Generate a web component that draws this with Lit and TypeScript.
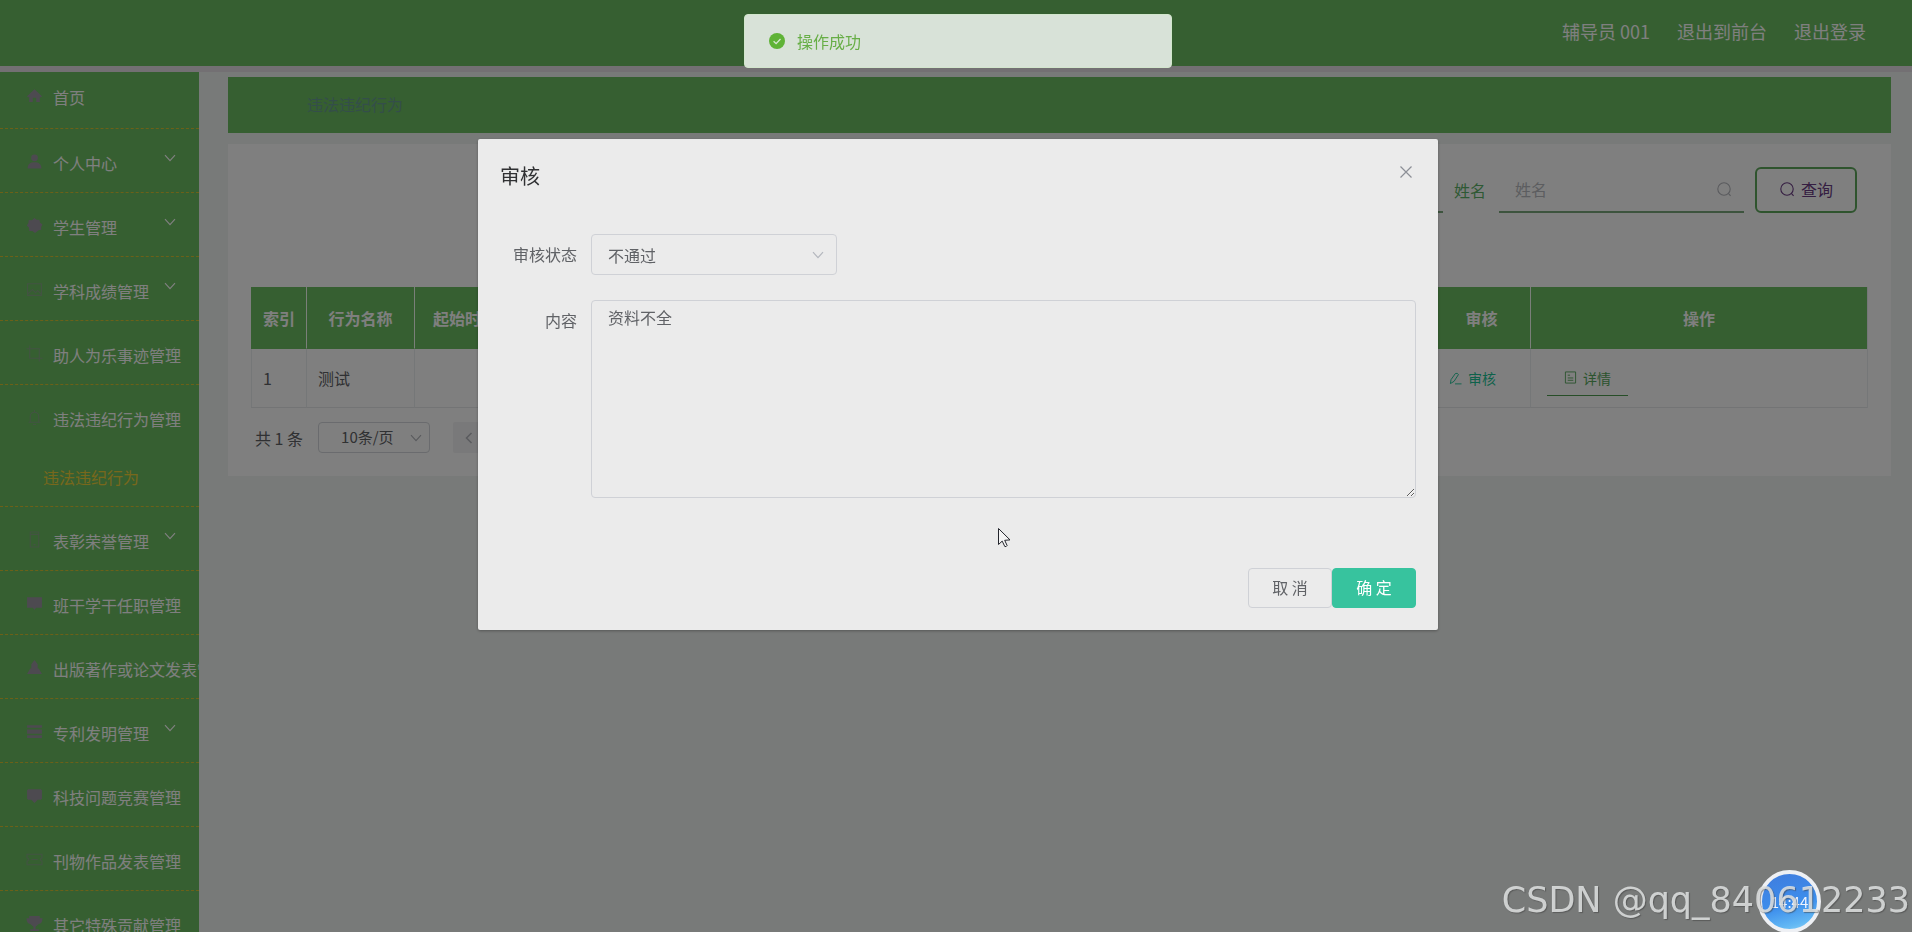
import { LitElement, html, css, svg, nothing } from "lit";
import { customElement, property, state } from "lit/decorators.js";
import { classMap } from "lit/directives/class-map.js";

const FONT = css`"Noto Sans CJK SC", "Noto Sans", sans-serif`;

const chevronDown = html`<svg viewBox="0 0 12 12" width="12" height="12" fill="none" stroke="currentColor" stroke-width="1.2"><path d="M1 3.2 6 8.6 11 3.2" /></svg>`;

const magnifier = html`<svg viewBox="0 0 16 16" width="16" height="16" fill="none" stroke="currentColor" stroke-width="1.1"><circle cx="8" cy="8" r="6.2" /><path d="m12.400 12.400 2.200 2.400" /></svg>`;

const menuIcons: Record<string, unknown> = {
  home: svg`<path d="M1 8.6 8 2l7 6.6-1 1.2-1-.9V14H9.6v-4H6.4v4H3V8.900l-1 .9z" />`,
  user: svg`<circle cx="8" cy="4.500" r="3.200" /><path d="M1.500 14.500c0-4 2.500-5.800 6.500-5.800s6.500 1.800 6.500 5.800z" />`,
  badge: svg`<path d="m8 1 2 1.700 2.700-.2.500 2.600L15.500 7l-1.300 2.300.2 2.700-2.600.5L8.500 15 6 13.200l-2.900-.1-.3-2.900L.8 8l1.500-2.300.3-2.800 2.900.1z" />`,
  picture: svg`<path fill="none" stroke="currentColor" d="M1.500 2.500h13v11h-13zM2 12l4-4 3 3 2-2 3.500 3.500" />`,
  crop: svg`<path fill="none" stroke="currentColor" d="M3.500.500v12h12M.500 3.500h12v12" />`,
  bell: svg`<path fill="none" stroke="currentColor" d="M2.500 12.500h11M4 12.500V7a4 4 0 0 1 8 0v5.500M8 1v2M6.500 14.500h3" />`,
  phone: svg`<path fill="none" stroke="currentColor" d="M4 .900h8v14.200H4zM7 12.800h2M4 3.200h8" />`,
  message: svg`<path d="M1 2h14v10H9.500L8 14l-1.500-2H1z" />`,
  mic: svg`<path d="M8 1 11 5v4h1l3 5H1l3-5h1V5z" />`,
  list: svg`<path d="M1 2h14v2.500H1zM1 6h14v4H1zM1 11.500h14V14H1z" />`,
  chat: svg`<path d="M2 2h12l1 1v8l-1 1h-3l-3 3-3-3H2l-1-1V3z" />`,
  ticket: svg`<path fill="none" stroke="currentColor" d="M1 3h14v3.500a1.500 1.500 0 0 0 0 3V13H1V9.500a1.500 1.500 0 0 0 0-3zM5 8h6" />`,
  trophy: svg`<path d="M3 1h10v2h2.500c0 3-1 5-3.500 5.500L9 11v2.500h3V15H4v-1.500h3V11L4 8.500C1.500 8 .500 6 .500 3H3z" />`,
};

interface MenuEntry {
  label: string;
  icon: string;
  faint?: boolean;
  leaf?: boolean;
  children?: string[];
}

const MENU: MenuEntry[] = [
  { label: "首页", icon: "home", leaf: true },
  { label: "个人中心", icon: "user" },
  { label: "学生管理", icon: "badge" },
  { label: "学科成绩管理", icon: "picture", faint: true },
  { label: "助人为乐事迹管理", icon: "crop", faint: true },
  { label: "违法违纪行为管理", icon: "bell", faint: true, children: ["违法违纪行为"] },
  { label: "表彰荣誉管理", icon: "phone", faint: true },
  { label: "班干学干任职管理", icon: "message" },
  { label: "出版著作或论文发表管理", icon: "mic" },
  { label: "专利发明管理", icon: "list" },
  { label: "科技问题竞赛管理", icon: "chat" },
  { label: "刊物作品发表管理", icon: "ticket", faint: true },
  { label: "其它特殊贡献管理", icon: "trophy" },
];

@customElement("side-menu")
export class SideMenu extends LitElement {
  static styles = css`
    :host {
      display: block;
      flex: none;
      width: 199px;
      overflow: hidden;
      background: #6cbe62;
      color: #fff;
      font: 16px/24px ${FONT};
    }
    .list,
    .sub {
      list-style: none;
      margin: 0;
      padding: 0;
    }
    .entry {
      border-bottom: 1px dashed #d8c030;
    }
    .link {
      position: relative;
      display: flex;
      align-items: center;
      gap: 10px;
      height: 63px;
      box-sizing: border-box;
      padding: 4px 0 0 26px;
      color: inherit;
      text-decoration: none;
      white-space: nowrap;
    }
    .entry:first-child .link {
      height: 56px;
      padding: 0 0 6px 26px;
    }
    .icon {
      flex: none;
      margin-bottom: 3px;
      color: #a68cb0;
      opacity: 0.8;
    }
    .faint {
      opacity: 0.45;
    }
    .arrow {
      position: absolute;
      top: 23px;
      right: 23px;
      display: flex;
    }
    .under {
      opacity: 0.4;
    }
    .sublink {
      display: block;
      padding: 17px 0 17px 43px;
      color: #f0d038;
      text-decoration: none;
    }
  `;

  render() {
    return html`<nav>
      <ul class="list">
        ${MENU.map(
          (m) => html`<li class="entry">
            <a class="link" href="#">
              <svg class=${classMap({ icon: true, faint: !!m.faint })} viewBox="0 0 16 16" width="17" height="17" fill="currentColor">${menuIcons[m.icon]}</svg>
              <span>${m.label}</span>
              ${m.leaf ? nothing : html`<span class=${classMap({ arrow: true, under: m.label.length > 7 })}>${chevronDown}</span>`}
            </a>
            ${m.children
              ? html`<ul class="sub">
                  ${m.children.map((c) => html`<li><a class="sublink" href="#">${c}</a></li>`)}
                </ul>`
              : nothing}
          </li>`
        )}
      </ul>
    </nav>`;
  }
}

@customElement("record-panel")
export class RecordPanel extends LitElement {
  static styles = css`
    :host {
      display: block;
      background: #fff;
      padding: 23px 23px 23px;
      color: #606266;
      font: 16px/24px ${FONT};
    }
    .search {
      display: flex;
      justify-content: flex-end;
      align-items: center;
      gap: 11px;
      padding-right: 11px;
    }
    .label {
      padding: 0 2px 0 0;
      color: #5cb268;
    }
    .field {
      display: flex;
      align-items: center;
      width: 245px;
      height: 46px;
      box-sizing: border-box;
      padding: 0 12px 0 16px;
      border-bottom: 2px solid #7aa87c;
      color: #b4b6bc;
    }
    .text {
      flex: 1;
      min-width: 0;
      padding: 0;
      border: 0;
      outline: 0;
      background: none;
      font: inherit;
      color: #606266;
    }
    .text::placeholder {
      color: #b8bac0;
      opacity: 1;
    }
    .query {
      display: flex;
      align-items: center;
      justify-content: center;
      gap: 6px;
      width: 102px;
      height: 46px;
      padding: 0 6px 2px;
      border: 2px solid #5ea85c;
      border-radius: 6px;
      background: none;
      color: #6a3c84;
      font: inherit;
    }
    .grid {
      width: 100%;
      margin-top: 74px;
      border-collapse: separate;
      border-spacing: 0;
      table-layout: fixed;
      border-right: 1px solid #ebeef0;
    }
    .grid th,
    .grid td {
      box-sizing: border-box;
      padding: 0 11px;
      border-bottom: 1px solid #e6e8ea;
      border-left: 1px solid #ebeef0;
      text-align: left;
    }
    .grid th {
      height: 62px;
      padding: 0;
      background: #6cbe62;
      border-bottom-color: #6cbe62;
      border-left-color: #f4fff2;
      color: #fff;
      font-weight: 700;
      text-align: center;
    }
    .grid th:first-child {
      border-left-color: #6cbe62;
    }
    .grid td {
      height: 59px;
    }
    .c-index {
      width: 55px;
    }
    .c-name {
      width: 108px;
    }
    .c-time {
      width: 101px;
    }
    .c-check {
      width: 98px;
    }
    .c-ops {
      width: 337px;
    }
    .action {
      display: inline-flex;
      align-items: center;
      gap: 6px;
      border: 0;
      background: none;
      font: 14px/20px ${FONT};
    }
    .check {
      padding: 0 5px 2px;
      color: #1cc496;
    }
    .detail {
      height: 36px;
      margin-left: 5px;
      padding: 0 17px;
      border-bottom: 1px solid #4f9c50;
      color: #58a85c;
    }
    .pager {
      display: flex;
      align-items: center;
      gap: 15px;
      margin-top: 14px;
      padding-left: 4px;
    }
    .size {
      display: grid;
      align-items: center;
      width: 112px;
    }
    .size-select {
      grid-area: 1 / 1;
      height: 31px;
      padding: 0 0 2px 22px;
      border: 1px solid #d4d6dc;
      border-radius: 4px;
      appearance: none;
      background: none;
      color: #606266;
      font: 15px/24px ${FONT};
    }
    .size-arrow {
      grid-area: 1 / 1;
      justify-self: end;
      display: flex;
      padding-right: 8px;
      color: #b4b6bc;
      pointer-events: none;
    }
    .prev {
      display: flex;
      align-items: center;
      justify-content: center;
      width: 32px;
      height: 31px;
      margin-left: 8px;
      padding: 0;
      border: 0;
      border-radius: 2px;
      background: #f2f2f4;
      color: #b4b6bc;
    }
  `;

  render() {
    return html`
      <form class="search">
        <div class="field"><input class="text" aria-label="行为名称" /></div>
        <label class="label" for="person">姓名</label>
        <div class="field">
          <input class="text" id="person" placeholder="姓名" />${magnifier}
        </div>
        <button class="query" type="button">${magnifier}<span>查询</span></button>
      </form>
      <table class="grid">
        <colgroup>
          <col class="c-index" /><col class="c-name" /><col class="c-time" /><col /><col class="c-check" /><col class="c-ops" />
        </colgroup>
        <thead>
          <tr><th>索引</th><th>行为名称</th><th>起始时间</th><th></th><th>审核</th><th>操作</th></tr>
        </thead>
        <tbody>
          <tr>
            <td>1</td>
            <td>测试</td>
            <td></td>
            <td></td>
            <td>
              <button class="action check" type="button">
                <svg viewBox="0 0 14 14" width="13" height="13" fill="none" stroke="currentColor"><path d="M1.500 12.500 2.200 8.200 6.800 1.700q2.200-1 3.400 1L5.500 10zM6.500 12.800h7" /></svg>
                <span>审核</span>
              </button>
            </td>
            <td>
              <button class="action detail" type="button">
                <svg viewBox="0 0 14 14" width="13" height="13" fill="none" stroke="currentColor"><path d="M1.500 1h11v12h-11zM4 4.500h2.500M4 7.500h6M4 10h6" /></svg>
                <span>详情</span>
              </button>
            </td>
          </tr>
        </tbody>
      </table>
      <div class="pager">
        <span>共 1 条</span>
        <span class="size">
          <select class="size-select" aria-label="每页条数"><option>10条/页</option></select>
          <span class="size-arrow">${chevronDown}</span>
        </span>
        <button class="prev" type="button" aria-label="上一页">
          <svg viewBox="0 0 12 12" width="12" height="12" fill="none" stroke="currentColor" stroke-width="1.500"><path d="M8.500 1 3.500 6l5 5" /></svg>
        </button>
      </div>
    `;
  }
}

@customElement("review-dialog")
export class ReviewDialog extends LitElement {
  @property() heading = "审核";

  static styles = css`
    :host {
      display: block;
      box-sizing: border-box;
      width: 960px;
      max-width: 100%;
      padding: 22px;
      border-radius: 2px;
      background: #ebebeb;
      box-shadow: 0 1px 3px rgba(0, 0, 0, 0.3);
      color: #606266;
      font: 16px/24px ${FONT};
    }
    .head {
      display: flex;
      justify-content: space-between;
      align-items: flex-start;
    }
    .title {
      margin: 0;
      color: #303133;
      font-size: 20px;
      font-weight: 400;
      line-height: 30px;
    }
    .close {
      display: flex;
      margin: 4px 3px 0 0;
      padding: 0;
      border: 0;
      background: none;
      color: #8c8f96;
    }
    .form {
      display: grid;
      grid-template-columns: 77px 1fr;
      gap: 25px 14px;
      padding: 43px 0 0;
    }
    .name {
      padding-top: 8px;
      text-align: right;
    }
    .pick {
      display: grid;
      align-items: center;
      width: 246px;
    }
    .select {
      grid-area: 1 / 1;
      height: 41px;
      padding: 1px 16px 0;
      border: 1px solid #cfd1d6;
      border-radius: 4px;
      appearance: none;
      background: none;
      color: #606266;
      font: inherit;
    }
    .arrow {
      grid-area: 1 / 1;
      justify-self: end;
      display: flex;
      padding-right: 13px;
      color: #b4b7be;
      pointer-events: none;
    }
    .area {
      display: block;
      box-sizing: border-box;
      height: 198px;
      padding: 4px 16px;
      border: 1px solid #cfd1d6;
      border-radius: 4px;
      outline: 0;
      background: none;
      color: #606266;
      font: inherit;
      resize: vertical;
    }
    .foot {
      display: flex;
      justify-content: flex-end;
      padding-top: 70px;
    }
    .btn {
      width: 84px;
      height: 40px;
      padding: 0 0 2px;
      border: 1px solid #cfd1d6;
      border-radius: 4px;
      background: none;
      color: #606266;
      font: inherit;
    }
    .primary {
      border-color: #37c39e;
      background: #37c39e;
      color: #fff;
    }
  `;

  render() {
    return html`
      <div class="head">
        <h2 class="title">${this.heading}</h2>
        <button class="close" type="button" aria-label="关闭">
          <svg viewBox="0 0 14 14" width="14" height="14" fill="none" stroke="currentColor" stroke-width="1.200"><path d="m1.500 1.500 11 11m0-11-11 11" /></svg>
        </button>
      </div>
      <form class="form">
        <label class="name" for="status">审核状态</label>
        <span class="pick">
          <select class="select" id="status">
            <option>不通过</option>
            <option>通过</option>
          </select>
          <span class="arrow">${chevronDown}</span>
        </span>
        <label class="name" for="content">内容</label>
        <textarea class="area" id="content" .value=${"资料不全"}></textarea>
      </form>
      <div class="foot">
        <button class="btn" type="button">取 消</button>
        <button class="btn primary" type="button">确 定</button>
      </div>
    `;
  }
}

@customElement("app-root")
export class AppRoot extends LitElement {
  @state() private user = "辅导员 001";

  static styles = css`
    :host {
      display: flex;
      flex-direction: column;
      height: 100vh;
      overflow: hidden;
      background: #f1f4f2;
      font: 16px/24px ${FONT};
    }
    .top {
      display: flex;
      flex: none;
      justify-content: flex-end;
      align-items: center;
      gap: 27px;
      height: 66px;
      box-sizing: border-box;
      padding: 0 46px 4px 0;
      background: #6cbe62;
      font-size: 18px;
    }
    .toplink {
      color: #fff;
      text-decoration: none;
    }
    .rule {
      flex: none;
      height: 6px;
      background: #e6e0e6;
    }
    .body {
      display: flex;
      flex: 1;
      min-height: 0;
    }
    .main {
      flex: 1;
      min-width: 0;
      padding: 5px 21px 0 29px;
    }
    .crumb {
      display: flex;
      align-items: center;
      height: 56px;
      box-sizing: border-box;
      margin-bottom: 11px;
      padding: 0 0 2px 79px;
      background: #6cbe62;
      color: #689c94;
    }
    .mask {
      position: fixed;
      inset: 0;
      box-sizing: border-box;
      padding: 139px 0 0 25%;
      background: rgba(0, 0, 0, 0.5);
    }
    .toast {
      position: fixed;
      top: 14px;
      left: 50%;
      display: flex;
      align-items: center;
      gap: 12px;
      width: 428px;
      box-sizing: border-box;
      margin-left: -212px;
      padding: 14px 24px;
      border: 1px solid #d2e6cc;
      border-radius: 4px;
      background: #d8e2d8;
      color: #67ae46;
    }
    .clock {
      position: fixed;
      right: 91px;
      bottom: -1px;
      display: grid;
      place-items: center;
      width: 63px;
      height: 63px;
      box-sizing: border-box;
      border: 4px solid #eef0f4;
      border-radius: 50%;
      background: linear-gradient(165deg, #3f7fe0 10%, #3d8eec 55%, #62b8f4 85%, #8cd0f6);
      color: #eef4ff;
      font-size: 15px;
    }
    .mark {
      position: fixed;
      right: 2px;
      bottom: 8px;
      color: rgba(226, 228, 228, 0.85);
      font: 35px/48px "DejaVu Sans", sans-serif;
      text-shadow: 1px 1px 1px rgba(60, 60, 60, 0.5);
    }
    .pointer {
      position: fixed;
      top: 527px;
      left: 997px;
    }
  `;

  render() {
    return html`
      <header class="top">
        <a class="toplink" href="#">${this.user}</a>
        <a class="toplink" href="#">退出到前台</a>
        <a class="toplink" href="#">退出登录</a>
      </header>
      <div class="rule"></div>
      <div class="body">
        <side-menu></side-menu>
        <main class="main">
          <div class="crumb">违法违纪行为</div>
          <record-panel></record-panel>
        </main>
      </div>
      <div class="mask"><review-dialog role="dialog"></review-dialog></div>
      <div class="toast" role="status">
        <svg viewBox="0 0 16 16" width="16" height="16"><circle cx="8" cy="8" r="8" fill="#5fb336" /><path d="m4.600 8.200 2.500 2.400 4.400-4.600" fill="none" stroke="#d8e8d4" stroke-width="1.300" /></svg>
        <span>操作成功</span>
      </div>
      <div class="clock">14:44</div>
      <div class="mark">CSDN @qq_840612233</div>
      <svg class="pointer" viewBox="0 0 14 21" width="14" height="21" fill="#f4f4f4" stroke="#23252c"><path d="M1.500 1.500v16l3.700-3.400 2.600 5.400q1.500.6 2.300-1L7.700 13.300l5.300-.4z" /></svg>
    `;
  }
}
